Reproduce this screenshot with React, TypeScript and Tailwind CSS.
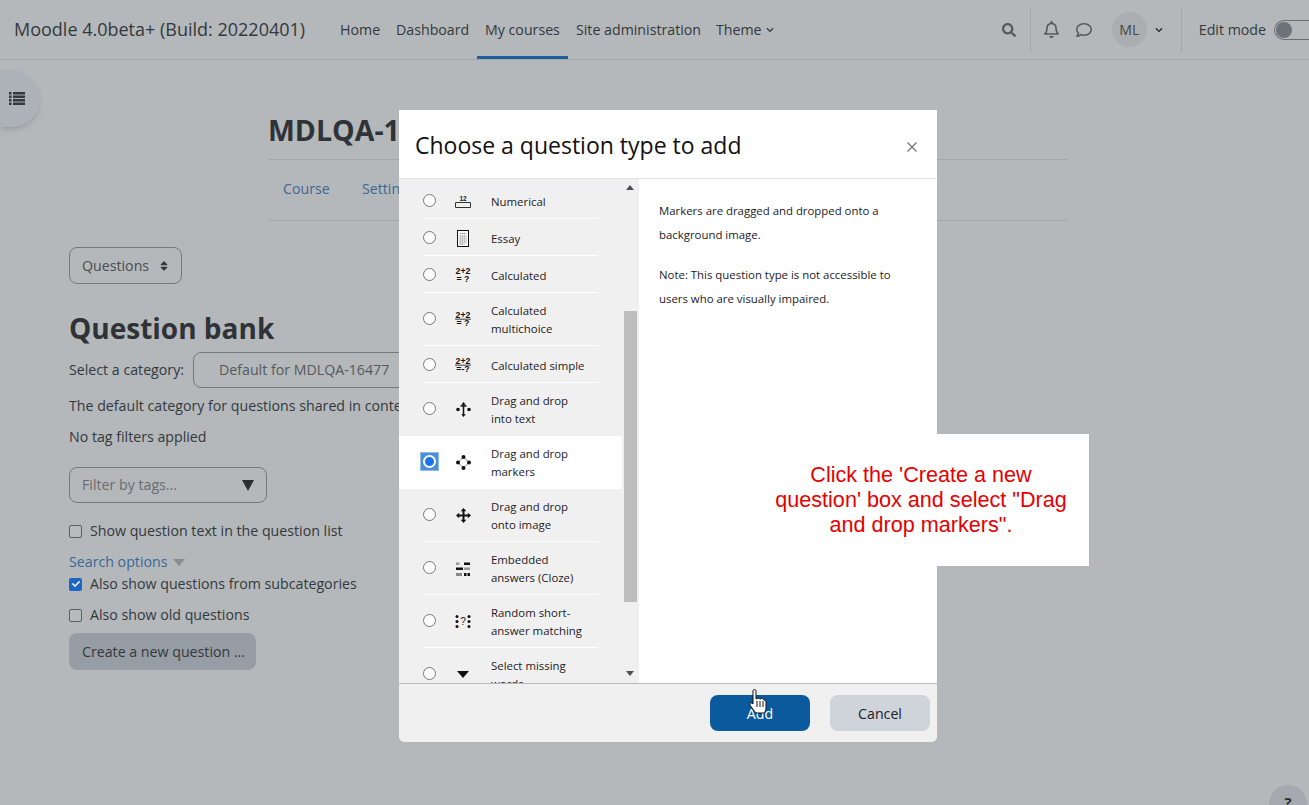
import React from "react";
import { FaSearch, FaRegBell, FaRegComment, FaSort, FaChevronDown, FaCheck } from "react-icons/fa";

const Arrows = ({ kind }: { kind: string }) => {
  if (kind === "numerical")
    return (
      <svg width="18" height="14" viewBox="0 0 18 14" fill="none">
        <text x="9" y="5.5" textAnchor="middle" fontSize="6.500" fontWeight="700" fill="#222" fontFamily="Liberation Sans">12</text>
        <path d="M1.500 7.500v5h15v-5M1.500 7.500h4M12.500 7.500h4M5 7.500h8" stroke="#333" strokeWidth="1" />
      </svg>
    );
  if (kind === "essay")
    return (
      <svg width="14" height="17" viewBox="0 0 14 17" fill="none">
        <rect x="1.500" y="0.500" width="11" height="16" fill="#f8f8f8" stroke="#111" />
        <path d="M4 3.500h6M3.500 6h7M3.500 8h7M3.500 10h7M3.500 12h7M3.500 14h5" stroke="#888" strokeDasharray="1.500 .5" />
      </svg>
    );
  if (kind === "calc" || kind === "multi" || kind === "simple")
    return (
      <svg width="18" height="17" viewBox="0 0 18 17">
        <text x="9" y="7" textAnchor="middle" fontSize="8.800" fontWeight="700" fill="#111" fontFamily="Liberation Sans">2+2</text>
        {kind !== "calc" && <rect x="1" y="7.500" width="16" height="1.500" fill="#777" />}
        <text x="9" y="15" textAnchor="middle" fontSize="8.800" fontWeight="700" fill="#111" fontFamily="Liberation Sans">{kind === "simple" ? "=-?" : "= ?"}</text>
      </svg>
    );
  if (kind === "cloze")
    return (
      <svg width="14" height="14" viewBox="0 0 14 14" fill="#111">
        <rect x="0" y="0.500" width="3.500" height="2.500" fill="#999" />
        <rect x="8" y="0.500" width="6" height="2.500" />
        <rect x="0" y="5.500" width="7" height="2.500" />
        <rect x="8" y="5.500" width="6" height="2.500" fill="#999" />
        <rect x="0" y="11" width="6" height="3" fill="#888" />
        <rect x="8" y="11" width="2.500" height="3" />
        <rect x="11.500" y="11" width="2.500" height="3" />
      </svg>
    );
  if (kind === "match")
    return (
      <svg width="16" height="15" viewBox="0 0 16 15" fill="#111">
        <circle cx="2" cy="2.500" r="1.500" /><circle cx="2" cy="7.500" r="1.500" /><circle cx="2" cy="12.500" r="1.500" />
        <circle cx="14" cy="2.500" r="1.500" /><circle cx="14" cy="7.500" r="1.500" /><circle cx="14" cy="12.500" r="1.500" />
        <text x="8" y="11" textAnchor="middle" fontSize="10" fill="#222" fontFamily="Liberation Sans">?</text>
      </svg>
    );
  if (kind === "select")
    return (
      <svg width="12" height="7" viewBox="0 0 12 7"><path d="M0 0h12L6 7z" fill="#111" /></svg>
    );
  if (kind === "markers")
    return (
      <svg width="15" height="15" viewBox="0 0 15 15" fill="#111">
        <path d="M7.500 2L13 7.500 7.500 13 2 7.500z" fill="none" stroke="#666" strokeWidth="0.800" />
        <circle cx="7.500" cy="2" r="2" /><circle cx="7.500" cy="13" r="2" />
        <circle cx="2" cy="7.500" r="2" /><circle cx="13" cy="7.500" r="2" />
      </svg>
    );
  if (kind === "text")
    return (
      <svg width="15" height="15" viewBox="0 0 15 15" fill="#111">
        <path d="M7.500 0l2.300 2.800H5.200zM7.500 15l2.300-2.800H5.200z" />
        <circle cx="2" cy="7.500" r="1.800" /><circle cx="13" cy="7.500" r="1.800" />
        <path d="M7.500 2v11M4.500 4h6" stroke="#111" strokeWidth="1.500" fill="none" />
      </svg>
    );
  return (
    <svg width="15" height="15" viewBox="0 0 15 15" fill="#111">
      <path d="M7.500 0l2.800 3.200H4.700zM7.500 15l2.800-3.200H4.700zM0 7.500l3.200-2.800v5.600zM15 7.500l-3.200-2.800v5.600z" />
      <path d="M2 7.500h11M7.500 2v11" stroke="#111" strokeWidth="2" fill="none" />
    </svg>
  );
};

type Row = { a: string; b?: string; icon: string; selected?: boolean };
const rows: Row[] = [
  { a: "Numerical", icon: "numerical" },
  { a: "Essay", icon: "essay" },
  { a: "Calculated", icon: "calc" },
  { a: "Calculated", b: "multichoice", icon: "multi" },
  { a: "Calculated simple", icon: "simple" },
  { a: "Drag and drop", b: "into text", icon: "text" },
  { a: "Drag and drop", b: "markers", icon: "markers", selected: true },
  { a: "Drag and drop", b: "onto image", icon: "image" },
  { a: "Embedded", b: "answers (Cloze)", icon: "cloze" },
  { a: "Random short-", b: "answer matching", icon: "match" },
  { a: "Select missing", b: "words", icon: "select" },
];

function QType({ r, hideLine }: { r: Row; hideLine: boolean }) {
  return (
    <div className={`relative flex items-center shrink-0 w-[223px] ${r.b ? "h-[53px]" : "h-[37px] pt-[2px]"} ${r.selected ? "bg-white" : ""}`}>
      <div className="w-[20px] ml-[20px] flex justify-center mt-[-2px]">
        {r.selected ? (
          <span className="w-[19px] h-[19px] bg-[#4a90d9] border border-[#8fbce8] flex items-center justify-center">
            <span className="w-[13px] h-[13px] rounded-full bg-[#1a73e8] border-2 border-white" />
          </span>
        ) : (
          <span className="w-[13px] h-[13px] rounded-full border border-[#777] bg-white" />
        )}
      </div>
      <div className="w-[28px] ml-[10px] flex justify-center">
        <Arrows kind={r.icon} />
      </div>
      <div className="ml-[14px] text-[11.400px] leading-[18px] text-[#1d2125] whitespace-nowrap">
        <div>{r.a}</div>
        {r.b && <div>{r.b}</div>}
      </div>
      {!hideLine && <div className="absolute left-[24px] bottom-0 w-[175px] h-px bg-white" />}
    </div>
  );
}

function Check({ label, checked }: { label: string; checked?: boolean }) {
  return (
    <div className="flex items-center h-[20px] text-[14.200px] text-[#33383c] whitespace-nowrap">
      {checked ? (
        <span className="w-[13px] h-[13px] rounded-[2px] bg-[#1e66c4] flex items-center justify-center">
          <FaCheck className="text-white text-[8px]" />
        </span>
      ) : (
        <span className="w-[13px] h-[13px] rounded-[2px] border border-[#5c6064] bg-[#b8bbbe]" />
      )}
      <span className="ml-[8px]">{label}</span>
    </div>
  );
}

export default function App() {
  return (
    <div className="relative w-[1309px] h-[805px] overflow-hidden bg-[#b4b8bb] font-['Open_Sans',sans-serif]">
      {/* Top bar */}
      <header className="relative flex items-center h-[60px] border-b border-[#a3a7aa] text-[#33383c] whitespace-nowrap">
        <div className="ml-[14px] text-[18px] w-[326px]">Moodle 4.0beta+ (Build: 20220401)</div>
        <nav className="flex h-full text-[14.200px]">
          <div className="flex items-center w-[56px]">Home</div>
          <div className="flex items-center w-[89px]">Dashboard</div>
          <div className="relative flex items-center w-[91px]">
            My courses
            <span className="absolute left-[-8px] w-[91px] bottom-0 h-[3px] bg-[#1b5f9e]" />
          </div>
          <div className="flex items-center w-[140px]">Site administration</div>
          <div className="flex items-center">
            Theme <FaChevronDown className="ml-[4px] text-[8px]" />
          </div>
        </nav>
        <div className="ml-auto flex items-center h-full">
          <FaSearch className="text-[14px] text-[#55595c]" />
          <span className="ml-[14px] w-px h-[45px] bg-[#a3a7aa]" />
          <FaRegBell className="ml-[12px] text-[17px] text-[#55595c]" />
          <FaRegComment className="ml-[16px] text-[16px] text-[#55595c]" />
          <span className="ml-[20px] w-[35px] h-[35px] rounded-full bg-[#aaaeb1] flex items-center justify-center text-[14.200px] text-[#44484c]">ML</span>
          <FaChevronDown className="ml-[8px] text-[8px] text-[#222]" />
          <span className="ml-[18px] w-px h-[45px] bg-[#a3a7aa]" />
          <span className="ml-[17px] text-[14.200px]">Edit mode</span>
          <span className="ml-[8px] w-[35px] h-[20px] rounded-l-full border border-[#6b6f75] border-r-0 flex items-center pl-[1px]">
            <span className="w-[16px] h-[16px] rounded-full bg-[#6d7178]" />
          </span>
        </div>
      </header>

      {/* Sidebar toggle */}
      <div className="absolute left-0 top-[70px] w-[40px] h-[57px] rounded-r-[28px] bg-[#adb1b8] shadow-md flex items-center pl-[9px]">
        <svg width="16" height="13" viewBox="0 0 16 13" fill="#33383c">
          <path d="M0 0h2.500v2.500H0zM4 0h12v2.500H4zM0 3.500h2.500V6H0zM4 3.500h12V6H4zM0 7h2.500v2.500H0zM4 7h12v2.500H4zM0 10.500h2.500V13H0zM4 10.500h12V13H4z" />
        </svg>
      </div>

      {/* Course header */}
      <div className="ml-[268px] w-[800px] pt-[51px] whitespace-nowrap">
        <h1 className="text-[28.500px] leading-[38px] font-bold text-[#2f3337] h-[49px] border-b border-[#a3a7aa]">MDLQA-16477</h1>
        <div className="flex items-center h-[61px] pb-[2px] border-b border-[#a3a7aa] pl-[15px] text-[14.200px] text-[#3b6894]">
          <span className="w-[79px]">Course</span>
          <span>Settings</span>
        </div>
      </div>

      {/* Main */}
      <main className="ml-[69px] whitespace-nowrap text-[14.200px] text-[#33383c]">
        <div className="mt-[26px] w-[113px] h-[37px] rounded-[8px] border border-[#75797e] flex items-center pl-[12px] text-[#4a4e52]">
          Questions <FaSort className="ml-[9px] text-[12px] text-[#33383c]" />
        </div>
        <h2 className="mt-[26px] text-[28px] leading-[36px] font-bold text-[#2f3337]">Question bank</h2>
        <div className="mt-[6px] flex items-center h-[36px]">
          <span>Select a category:</span>
          <div className="ml-[9px] w-[300px] h-[36px] rounded-[8px] border border-[#75797e] flex items-center pl-[25px] text-[#55595c]">Default for MDLQA-16477</div>
        </div>
        <div className="mt-[8px] h-[20px] leading-[20px]">The default category for questions shared in context</div>
        <div className="mt-[11px] h-[20px] leading-[20px]">No tag filters applied</div>
        <div className="mt-[20px] w-[198px] h-[36px] rounded-[8px] border border-[#75797e] flex items-center pl-[12px] text-[#686c70]">
          Filter by tags...
          <svg className="ml-auto mr-[12px]" width="12" height="11" viewBox="0 0 12 11"><path d="M0 0h12L6 11z" fill="#2b2e31" /></svg>
        </div>
        <div className="mt-[18px]"><Check label="Show question text in the question list" /></div>
        <div className="mt-[11px] h-[20px] flex items-center text-[#3b6894]">
          Search options
          <svg className="ml-[6px]" width="12" height="7" viewBox="0 0 12 7"><path d="M0 0h12L6 7z" fill="#8a8d90" /></svg>
        </div>
        <div className="mt-[2px]"><Check checked label="Also show questions from subcategories" /></div>
        <div className="mt-[11px]"><Check label="Also show old questions" /></div>
        <div className="mt-[8px] w-[187px] h-[37px] rounded-[8px] bg-[#979da4] flex items-center pl-[13px]">Create a new question ...</div>
      </main>

      {/* Help */}
      <div className="absolute left-[1269px] top-[785px] w-[38px] h-[38px] rounded-full bg-[#a5a9af] flex justify-center pt-[6px] text-[15px] font-bold text-[#2b2e31]">?</div>

      {/* Modal */}
      <div className="absolute left-[399px] top-[110px] w-[538px] h-[632px] bg-white flex flex-col rounded-b-[6px]">
        <div className="h-[69px] flex items-center justify-between px-[16px] pt-[3px] border-b border-[#dee2e6]">
          <span className="text-[23px] text-[#111]">Choose a question type to add</span>
          <svg className="mr-[4px] mt-[2px]" width="10" height="10" viewBox="0 0 10 10"><path d="M.5.5l9 9M9.500.5l-9 9" stroke="#777" strokeWidth="1.300" /></svg>
        </div>
        <div className="flex h-[505px] border-b border-[#bbb]">
          <div className="relative w-[240px] bg-[#f0f0f0] flex">
            <div className="w-[223px] h-full overflow-hidden flex flex-col pt-[3px]">
              {rows.map((r) => (
                <QType key={r.a + r.b} r={r} hideLine={!!r.selected || r.b === "into text"} />
              ))}
            </div>
            <div className="relative w-[17px]">
              <div className="absolute left-[2px] top-[132px] w-[13px] h-[291px] bg-[#bdbdbd]" />
              <svg className="absolute left-[4px] top-[6px]" width="8" height="5" viewBox="0 0 8 5"><path d="M4 0l4 5H0z" fill="#505050" /></svg>
              <svg className="absolute left-[4px] top-[492px]" width="8" height="5" viewBox="0 0 8 5"><path d="M0 0h8L4 5z" fill="#505050" /></svg>
            </div>
          </div>
          <div className="flex-1 pl-[20px] pt-[20px] pr-[40px] text-[11.400px] leading-[24px] text-[#1d2125]">
            <p>Markers are dragged and dropped onto a background image.</p>
            <p className="mt-[16px]">Note: This question type is not accessible to users who are visually impaired.</p>
          </div>
        </div>
        <div className="flex-1 bg-[#f0f0f0] flex items-start justify-end pt-[11px] pr-[7px] gap-[20px] text-[14.200px] rounded-b-[6px]">
          <div className="w-[100px] h-[36px] pt-[2px] rounded-[8px] bg-[#0b5a9e] text-white flex items-center justify-center">Add</div>
          <div className="w-[100px] h-[36px] pt-[2px] rounded-[8px] bg-[#ced4da] text-[#1d2125] flex items-center justify-center">Cancel</div>
        </div>
      </div>

      {/* Callout */}
      <div className="absolute left-[753px] top-[434px] w-[336px] h-[132px] pb-[2px] bg-white flex items-center justify-center text-center font-['Liberation_Sans',sans-serif] text-[21.600px] leading-[25px] text-[#e60000]">
        <p>Click the 'Create a new<br />question' box and select "Drag<br />and drop markers".</p>
      </div>

      {/* Pointer */}
      <svg className="absolute left-[749px] top-[689px]" width="18" height="25" viewBox="0 0 18 25">
        <path d="M4 2c0-2 3-2 3 0v8c2-1 3-1 4 0 2-1 3-1 4 1 1 0 2 1 2 2v5c0 3-1 6-3 6H8c-2 0-3-3-5-5l-2-3c-1-2 1-3 3-1z" fill="#fff" stroke="#111" strokeWidth="1" />
        <path d="M8 12v6M11 12v6M14 12v6" stroke="#111" strokeWidth="1" />
      </svg>
    </div>
  );
}
